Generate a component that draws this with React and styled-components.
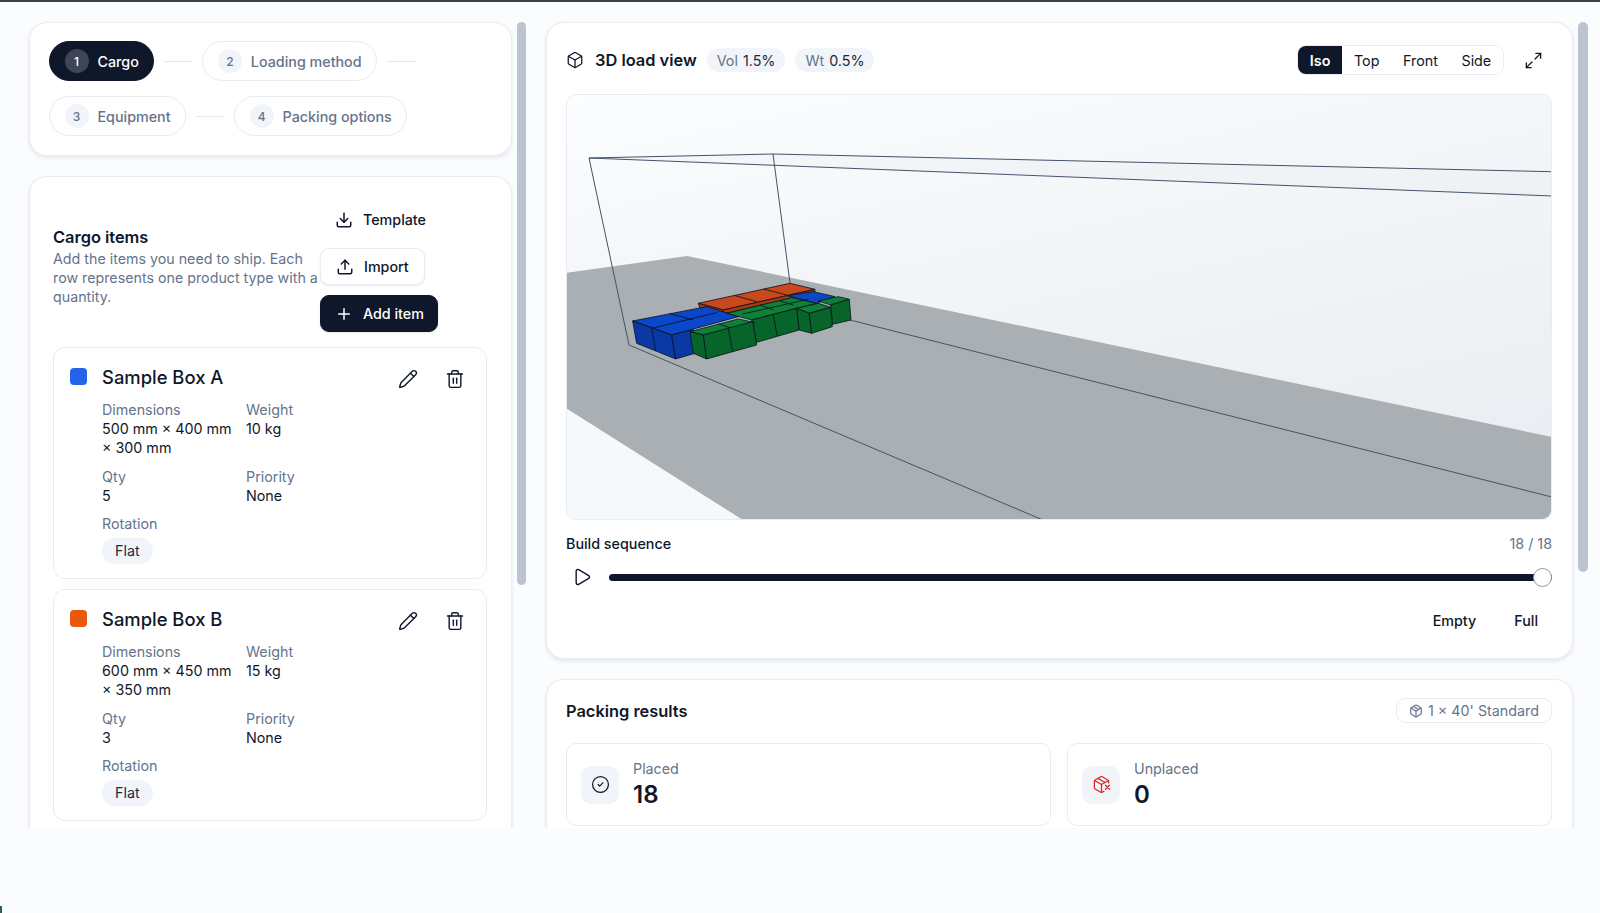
import styled, { createGlobalStyle } from 'styled-components';
import { Box, CircleCheck, Download, Maximize2, Package, PackageX, Pencil, Play, Plus, Trash2, Upload } from 'lucide-react';

const GlobalStyle = createGlobalStyle`
  html, body { margin: 0; padding: 0; height: 100%; background: #fafcfe; }
  body { font-family: Inter, "Liberation Sans", sans-serif; color: #0f172a; }
  * { box-sizing: border-box; }
`;

const Screen = styled.div`
  position: relative;
  height: 913px;
  overflow: hidden;
  border-top: 2px solid #3a4047;
  padding: 18px 0 0 27px;
  display: flex;
`;

const Corner = styled.div`
  position: absolute;
  left: 0;
  bottom: 0;
  width: 2px;
  height: 7px;
  background: #2f5f52;
`;

const Pane = styled.div`
  width: ${p => p.$width}px;
  height: 808px;
  overflow: hidden;
  padding: 2px 2px 0;
  display: flex;
  flex-direction: column;
  gap: 20px;
  flex-shrink: 0;
`;

const ScrollThumb = styled.div`
  width: ${p => p.$width}px;
  height: ${p => p.$height}px;
  margin: 2px ${p => p.$after}px 0 ${p => p.$before}px;
  border-radius: 5px;
  background: #bcc4d1;
  flex-shrink: 0;
`;

const Card = styled.section`
  background: #fff;
  border: 1px solid #e8edf3;
  border-radius: 18px;
  box-shadow: 0 2px 5px rgba(15, 23, 42, 0.09);
  padding: ${p => p.$padding};
  flex-shrink: 0;
`;

const Steps = styled.div`
  display: flex;
  flex-wrap: wrap;
  align-items: center;
  gap: 15px 9.5px;
`;

const StepPill = styled.div`
  height: 40px;
  display: flex;
  align-items: center;
  gap: 9px;
  padding: 0 14.5px;
  border-radius: 20px;
  border: 1px solid ${p => (p.$active ? '#0f172a' : '#e8edf3')};
  background: ${p => (p.$active ? '#0f172a' : '#fff')};
  color: ${p => (p.$active ? '#fff' : '#64748b')};
  font-size: 14.3px;
  font-weight: 500;
`;

const StepNum = styled.span`
  width: 24px;
  height: 24px;
  border-radius: 50%;
  display: flex;
  align-items: center;
  justify-content: center;
  font-size: 12px;
  background: ${p => (p.$active ? 'rgba(255,255,255,0.2)' : '#f1f5f9')};
`;

const Connector = styled.span`
  width: 29px;
  height: 1px;
  background: #e2e8f0;
`;

const CargoHead = styled.div`
  display: flex;
  align-items: center;
  margin-bottom: 15px;
`;

const CargoText = styled.div`
  width: 267px;
`;

const CardTitle = styled.h2`
  margin: 0;
  font-size: 16.4px;
  line-height: 20px;
  font-weight: 600;
`;

const CargoDesc = styled.p`
  margin: 2px 0 0;
  font-size: 14.25px;
  line-height: 19px;
  color: #64748b;
`;

const Actions = styled.div`
  display: flex;
  flex-direction: column;
  align-items: flex-start;
  gap: 10px;
`;

const Button = styled.button`
  height: 37px;
  display: flex;
  align-items: center;
  gap: 10px;
  padding: ${p => (p.$variant === 'outline' ? '0 15px' : p.$variant === 'primary' ? '0 13px 0 14px' : '0 14px')};
  border-radius: 9px;
  font: 500 14.3px Inter, "Liberation Sans", sans-serif;
  color: ${p => (p.$variant === 'primary' ? '#fff' : '#0f172a')};
  background: ${p => (p.$variant === 'primary' ? '#0f172a' : p.$variant === 'outline' ? '#fff' : 'transparent')};
  border: 1px solid ${p => (p.$variant === 'primary' ? '#0f172a' : p.$variant === 'outline' ? '#e8edf3' : 'transparent')};
  box-shadow: ${p => (p.$variant === 'ghost' ? 'none' : '0 1px 2px rgba(15, 23, 42, 0.1)')};
`;

const ItemList = styled.div`
  display: flex;
  flex-direction: column;
  gap: 10px;
`;

const ItemCard = styled.article`
  border: 1px solid #e8edf3;
  border-radius: 12px;
  padding: 15px 21px 14px 16px;
  display: grid;
  grid-template-columns: 17px 1fr auto;
  column-gap: 15px;
`;

const Swatch = styled.span`
  width: 17px;
  height: 17px;
  margin-top: 5px;
  border-radius: 4px;
  background: ${p => p.$color};
`;

const ItemName = styled.h3`
  margin: -1px 0 1px;
  font-size: 18.4px;
  line-height: 30px;
  font-weight: 500;
`;

const ItemTools = styled.div`
  display: flex;
  gap: 27px;
  padding-top: 6px;
`;

const Specs = styled.div`
  grid-column: 2 / 4;
  display: grid;
  grid-template-columns: 130px 1fr;
  column-gap: 14px;
  row-gap: 9.5px;
  margin-top: 7px;
  font-size: 14.3px;
  line-height: 19px;
`;

const SpecLabel = styled.div`
  color: #64748b;
`;

const SpecValue = styled.div`
  color: #0f172a;
`;

const Tag = styled.span`
  display: inline-block;
  margin-top: 5px;
  padding: 0 13px;
  height: 26px;
  line-height: 26px;
  border-radius: 13px;
  background: #f1f5f9;
  font-size: 14.3px;
  color: #1e293b;
`;

const ViewHead = styled.div`
  display: flex;
  align-items: center;
  gap: 10px;
  margin-bottom: 19px;
`;

const ViewTitle = styled.h2`
  margin: 0 0 0 1px;
  font-size: 16.4px;
  font-weight: 600;
`;

const Chip = styled.span`
  height: 24px;
  display: flex;
  align-items: center;
  gap: 5px;
  padding: 0 10px;
  border-radius: 12px;
  background: #f1f5f9;
  font-size: 14.3px;
  color: #1e293b;
  small { font-size: 14.3px; color: #64748b; }
`;

const Segments = styled.div`
  margin-left: auto;
  display: flex;
  height: 30px;
  border: 1px solid #e8edf3;
  border-radius: 9px;
  overflow: hidden;
`;

const Segment = styled.span`
  display: flex;
  align-items: center;
  padding: 0 11.8px;
  font-size: 14.3px;
  font-weight: ${p => (p.$active ? 600 : 400)};
  background: ${p => (p.$active ? '#0f172a' : '#fff')};
  color: ${p => (p.$active ? '#fff' : '#0f172a')};
`;

const ExpandButton = styled.span`
  display: flex;
  margin: 0 9px 0 10px;
`;

const Viewport = styled.div`
  height: 426px;
  border: 1px solid #e8edf3;
  border-radius: 10px;
  overflow: hidden;
  background: linear-gradient(168deg, #fcfdfe 0%, #f5f7f9 28%, #e8ebf0 100%);
  svg { display: block; }
`;

const SeqHead = styled.div`
  display: flex;
  justify-content: space-between;
  align-items: center;
  height: 20px;
  margin-top: 13px;
  font-size: 14.3px;
  font-weight: 500;
  span { color: #64748b; font-weight: 400; }
`;

const SeqRow = styled.div`
  display: flex;
  align-items: center;
  gap: 17px;
  margin: 14px 0 0 6px;
  height: 20px;
`;

const Track = styled.div`
  position: relative;
  flex: 1;
  height: 7px;
  border-radius: 4px;
  background: #0f172a;
`;

const Thumb = styled.span`
  position: absolute;
  right: 0;
  top: -6px;
  width: 19px;
  height: 19px;
  border-radius: 50%;
  background: #fff;
  border: 1.5px solid #8d99aa;
`;

const SeqActions = styled.div`
  display: flex;
  justify-content: flex-end;
  gap: 38px;
  margin: 24px 14px 0 0;
  font-size: 14.3px;
  font-weight: 500;
  line-height: 20px;
  padding-bottom: 27px;
`;

const ResultHead = styled.div`
  display: flex;
  align-items: center;
  justify-content: space-between;
  margin-bottom: 20px;
`;

const ContainerBadge = styled.span`
  height: 25px;
  display: flex;
  align-items: center;
  gap: 5px;
  padding: 0 12px;
  border: 1px solid #e8edf3;
  border-radius: 9px;
  font-size: 14.3px;
  color: #64748b;
`;

const Stats = styled.div`
  display: grid;
  grid-template-columns: 1fr 1fr;
  gap: 16px;
`;

const StatCard = styled.div`
  height: 83px;
  border: 1px solid #e8edf3;
  border-radius: 10px;
  padding: 0 14px;
  display: flex;
  align-items: center;
  gap: 14px;
`;

const StatIcon = styled.span`
  width: 38px;
  height: 38px;
  border-radius: 10px;
  background: #f1f5f9;
  display: flex;
  align-items: center;
  justify-content: center;
  color: ${p => p.$color};
`;

const StatLabel = styled.div`
  font-size: 14.3px;
  line-height: 19px;
  color: #64748b;
`;

const StatValue = styled.div`
  font-size: 24px;
  line-height: 30px;
  font-weight: 600;
  margin-top: 2px;
`;

// scene polygons, [points, fill], painted back to front
const SCENE = [
  ['415,490 690,430 765,448 490,510', '#c9481c'],
  ['415,490 490,510 490,522 420,505', '#a63a17'],
  ['490,510 765,448 765,458 490,522', '#a63a17'],
  ['680,467 760,455 825,470 770,490', '#0b47c9'],
  ['218,543 440,500 535,530 335,585', '#0b47c9'],
  ['218,543 335,585 347,657 230,610', '#0a39a6'],
  ['335,585 400,568 405,640 347,657', '#0a39a6'],
  ['775,483 835,470 868,478 812,495', '#0f8038'],
  ['812,495 868,478 873,540 818,553', '#08652a'],
  ['500,520 695,473 770,490 710,505 575,540', '#0f8038'],
  ['575,540 710,505 718,570 590,607', '#08652a'],
  ['710,505 775,490 812,502 748,520', '#0f8038'],
  ['710,505 748,520 755,580 718,570', '#08652a'],
  ['748,520 812,502 817,560 755,580', '#08652a'],
  ['390,575 535,537 585,548 430,585', '#0f8038'],
  ['390,575 430,585 440,657 400,640', '#08652a'],
  ['430,585 578,545 590,615 440,657', '#08652a'],
];

const SEAMS = [
  '525,467 590,485', '610,447 680,465', '275,565 470,518', '328,520 400,540',
  '275,565 287,632', '505,563 517,632', '475,552 510,563', '640,525 652,588',
  '548,522 745,478', '600,495 640,510', '660,483 700,495',
];

const LoadScene = () => (
  <svg width="984" height="424" viewBox="567 95 984 424">
    <polygon points="566,408 743,520 566,520" fill="#f6f9fc" />
    <polygon points="566,273 687,256 1552,437 1552,520 743,520 566,408" fill="#aaafb3" />
    <polygon points="589,158 773,154 1552,171.7 1552,196" fill="#e4e8ee" fillOpacity="0.2" />
    <g fill="none" stroke="#46526a" strokeWidth="1">
      <polyline points="629,345 589,158 773,154 1552,171.7" />
      <line x1="589" y1="158" x2="1552" y2="196" />
      <line x1="773" y1="154" x2="790" y2="283" />
      <polyline points="1043,520 629,345" />
      <line x1="850" y1="320" x2="1552" y2="497" />
    </g>
    <g transform="translate(560 140) scale(0.3333)" stroke="#07101c" strokeWidth="2.4" strokeLinejoin="round">
      {SCENE.map(([points, fill]) => <polygon key={points} points={points} fill={fill} />)}
      {SEAMS.map(points => <polyline key={points} points={points} fill="none" />)}
    </g>
  </svg>
);

const STEPS = ['Cargo', 'Loading method', 'Equipment', 'Packing options'];

const ITEMS = [
  { name: 'Sample Box A', color: '#2563eb', dims: '500 mm × 400 mm × 300 mm', weight: '10 kg', qty: 5 },
  { name: 'Sample Box B', color: '#ea580c', dims: '600 mm × 450 mm × 350 mm', weight: '15 kg', qty: 3 },
];

const App = () => (
  <Screen>
    <GlobalStyle />
    <Pane $width={487}>
      <Card $padding="18px 19px 19px">
        <Steps>
          {STEPS.map((step, i) => (
            <StepGroup key={step} index={i} label={step} />
          ))}
        </Steps>
      </Card>
      <Card $padding="24px 24px 30px 23px">
        <CargoHead>
          <CargoText>
            <CardTitle>Cargo items</CardTitle>
            <CargoDesc>Add the items you need to ship. Each row represents one product type with a quantity.</CargoDesc>
          </CargoText>
          <Actions>
            <Button $variant="ghost"><Download size={18} />Template</Button>
            <Button $variant="outline"><Upload size={18} />Import</Button>
            <Button $variant="primary"><Plus size={18} />Add item</Button>
          </Actions>
        </CargoHead>
        <ItemList>
          {ITEMS.map(item => (
            <ItemCard key={item.name}>
              <Swatch $color={item.color} />
              <ItemName>{item.name}</ItemName>
              <ItemTools>
                <Pencil size={20} strokeWidth={1.7} />
                <Trash2 size={20} strokeWidth={1.7} />
              </ItemTools>
              <Specs>
                <div><SpecLabel>Dimensions</SpecLabel><SpecValue>{item.dims}</SpecValue></div>
                <div><SpecLabel>Weight</SpecLabel><SpecValue>{item.weight}</SpecValue></div>
                <div><SpecLabel>Qty</SpecLabel><SpecValue>{item.qty}</SpecValue></div>
                <div><SpecLabel>Priority</SpecLabel><SpecValue>None</SpecValue></div>
                <div><SpecLabel>Rotation</SpecLabel><Tag>Flat</Tag></div>
              </Specs>
            </ItemCard>
          ))}
        </ItemList>
      </Card>
    </Pane>
    <ScrollThumb $width={9} $height={563} $before={3} $after={18} />
    <Pane $width={1031}>
      <Card $padding="22px 20px 0 19px">
        <ViewHead>
          <Box size={18} strokeWidth={1.7} />
          <ViewTitle>3D load view</ViewTitle>
          <Chip><small>Vol</small>1.5%</Chip>
          <Chip><small>Wt</small>0.5%</Chip>
          <Segments>
            <Segment $active>Iso</Segment>
            <Segment>Top</Segment>
            <Segment>Front</Segment>
            <Segment>Side</Segment>
          </Segments>
          <ExpandButton><Maximize2 size={19} strokeWidth={1.7} /></ExpandButton>
        </ViewHead>
        <Viewport><LoadScene /></Viewport>
        <SeqHead>Build sequence<span>18 / 18</span></SeqHead>
        <SeqRow>
          <Play size={20} strokeWidth={1.7} />
          <Track><Thumb /></Track>
        </SeqRow>
        <SeqActions><span>Empty</span><span>Full</span></SeqActions>
      </Card>
      <Card $padding="18px 20px 20px 19px">
        <ResultHead>
          <CardTitle>Packing results</CardTitle>
          <ContainerBadge><Package size={14} />1 × 40' Standard</ContainerBadge>
        </ResultHead>
        <Stats>
          <StatCard>
            <StatIcon $color="#0f172a"><CircleCheck size={19} strokeWidth={1.6} /></StatIcon>
            <div><StatLabel>Placed</StatLabel><StatValue>18</StatValue></div>
          </StatCard>
          <StatCard>
            <StatIcon $color="#dc2626"><PackageX size={19} strokeWidth={1.6} /></StatIcon>
            <div><StatLabel>Unplaced</StatLabel><StatValue>0</StatValue></div>
          </StatCard>
        </Stats>
      </Card>
    </Pane>
    <ScrollThumb $width={10} $height={550} $before={3} $after={0} />
    <Corner />
  </Screen>
);

function StepGroup({ index, label }) {
  return (
    <>
      <StepPill $active={index === 0}>
        <StepNum $active={index === 0}>{index + 1}</StepNum>
        {label}
      </StepPill>
      {index < 3 && <Connector />}
    </>
  );
}

export default App;
